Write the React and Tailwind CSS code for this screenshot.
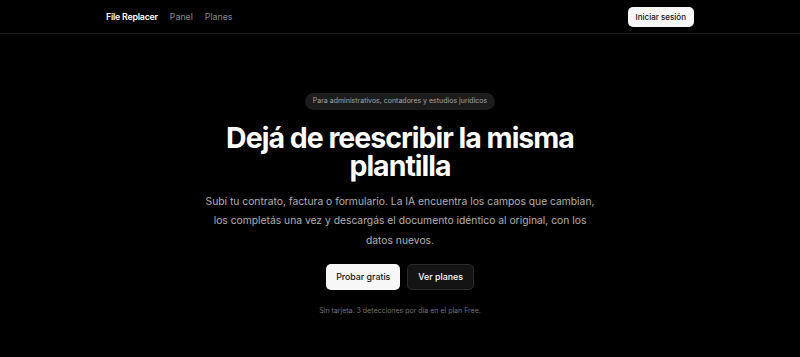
const navLinks = ["Panel", "Planes"];

const App = () => {
  return (
    <div className="min-h-[357px] bg-black text-white" style={{ fontFamily: "Inter, 'Noto Sans', sans-serif" }}>
      <header className="border-b border-[#1a1a1a]">
        <nav className="mx-auto flex h-[33px] w-[588px] items-center justify-between">
          <div className="flex items-center gap-[12px] text-[8.8px]">
            <span className="font-semibold tracking-tight text-white">File Replacer</span>
            {navLinks.map((link) => (
              <a key={link} href="#" className="text-[#8a8a8a]">
                {link}
              </a>
            ))}
          </div>
          <button className="h-[20px] rounded-[5px] bg-[#f7f7f7] px-[8px] text-[8px] font-medium text-[#111]">
            Iniciar sesión
          </button>
        </nav>
      </header>

      <main className="flex flex-col items-center pt-[59px] text-center">
        <span className="rounded-full bg-[#1c1c1c] px-[8px] py-[3px] text-[7px] text-[#a3a3a3]">
          Para administrativos, contadores y estudios jurídicos
        </span>

        <h1 className="mt-[14px] w-[400px] text-[28.5px] font-bold leading-[28px] tracking-[-0.035em] text-white">
          Dejá de reescribir la misma plantilla
        </h1>

        <p className="mt-[12px] w-[400px] text-[10.3px] leading-[19.5px] text-[#b0b0b0]">
          Subí tu contrato, factura o formulario. La IA encuentra los campos que cambian, los completás una vez y
          descargás el documento idéntico al original, con los datos nuevos.
        </p>

        <div className="mt-[14px] flex gap-[7px]">
          <button className="h-[26px] rounded-[5px] bg-[#f7f7f7] px-[10px] text-[8.8px] font-medium text-[#111]">
            Probar gratis
          </button>
          <button className="h-[26px] rounded-[5px] border border-[#2a2a2a] bg-[#141414] px-[10px] text-[8.8px] font-medium text-white">
            Ver planes
          </button>
        </div>

        <p className="mt-[16px] text-[7px] text-[#747474]">Sin tarjeta. 3 detecciones por día en el plan Free.</p>
      </main>
    </div>
  );
};

export default App;
